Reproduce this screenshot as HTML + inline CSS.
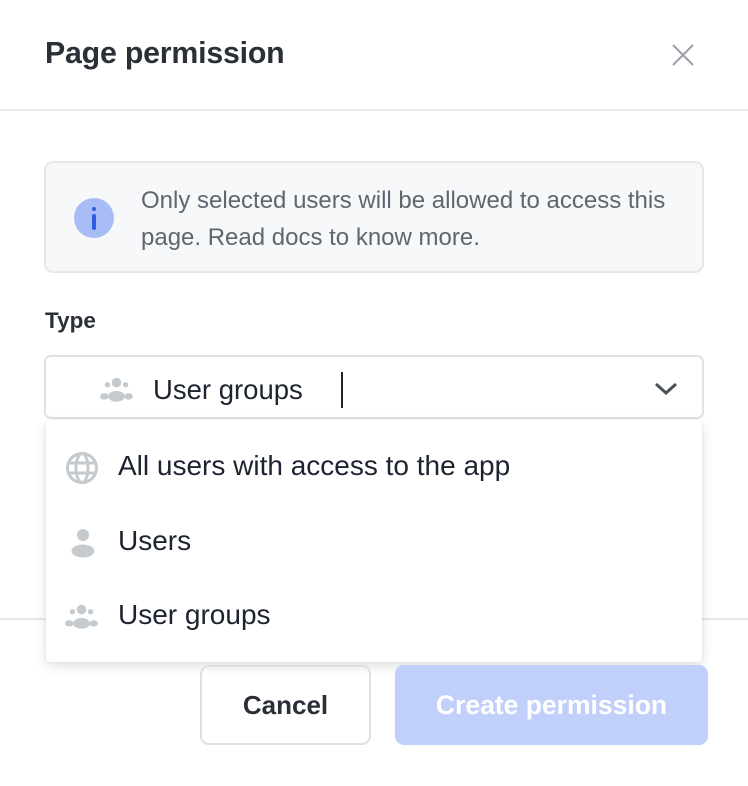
<!DOCTYPE html>
<html><head><style>
*{box-sizing:border-box;margin:0;padding:0}
body{width:748px;height:786px;background:#fff;font-family:"Liberation Sans",sans-serif;position:relative;overflow:hidden;color:#1d2330}
.abs{position:absolute}
</style></head><body>
<div class="abs" style="left:45px;top:37px;font-size:30.3px;font-weight:600;color:#2a2f38;letter-spacing:-0.2px">Page permission</div>
<svg class="abs" style="left:671px;top:43px" width="24" height="24" viewBox="0 0 24 24"><path d="M2 2L22 22M22 2L2 22" stroke="#9aa0a8" stroke-width="2"/></svg>
<div class="abs" style="left:0;top:109px;width:748px;height:2px;background:#e6e8eb"></div>
<div class="abs" style="left:44px;top:161px;width:660px;height:112px;background:#f7f8fa;border:2px solid #e5e7ea;border-radius:9px"></div>
<div class="abs" style="left:74px;top:198px;width:40px;height:40px;border-radius:50%;background:#a8bcf5"></div>
<div class="abs" style="left:92px;top:207px;width:4px;height:4px;border-radius:2px;background:#2f5bde"></div>
<div class="abs" style="left:92px;top:214px;width:4px;height:16px;border-radius:2px;background:#2f5bde"></div>
<div class="abs" style="left:141px;top:182px;font-size:24px;line-height:37px;color:#5e6670;width:550px">Only selected users will be allowed to access this page. Read docs to know more.</div>
<div class="abs" style="left:45px;top:308px;font-size:22.5px;font-weight:600;color:#2a2f38">Type</div>
<div class="abs" style="left:44px;top:355px;width:660px;height:64px;border:2px solid #dfe2e6;border-radius:7px"></div>
<svg class="abs" style="left:99px;top:376px" width="35" height="28" viewBox="0 0 33 26"><g fill="#c5cacf"><circle cx="16.5" cy="6" r="4.5"/><circle cx="8" cy="8" r="2.5"/><circle cx="25" cy="8" r="2.5"/><ellipse cx="16.5" cy="19" rx="8" ry="5"/><ellipse cx="5" cy="19" rx="4" ry="3"/><ellipse cx="28" cy="19" rx="4" ry="3"/></g></svg>
<div class="abs" style="left:153px;top:374px;font-size:27.5px;color:#1d2330">User groups</div>
<div class="abs" style="left:341px;top:372px;width:2px;height:36px;background:#1d2330"></div>
<svg class="abs" style="left:654px;top:381px" width="24" height="16" viewBox="0 0 24 16"><path d="M2 3L12 12L22 3" stroke="#4b5058" stroke-width="3" fill="none"/></svg>
<div class="abs" style="left:0;top:618px;width:748px;height:2px;background:#e6e8eb"></div>
<div class="abs" style="left:46px;top:420px;width:656px;height:242px;background:#fff;box-shadow:0 4px 12px rgba(0,0,0,0.12),0 0 2px rgba(0,0,0,0.08);border-radius:3px"></div>
<svg class="abs" style="left:66px;top:452px" width="32" height="32" viewBox="0 0 32 32"><circle cx="16" cy="16" r="14.5" fill="none" stroke="#c5cacf" stroke-width="3"/><ellipse cx="16" cy="16" rx="6" ry="14.5" fill="none" stroke="#c5cacf" stroke-width="3"/><path d="M2 11H30M2 21H30" stroke="#c5cacf" stroke-width="3"/></svg>
<div class="abs" style="left:118px;top:450px;font-size:28px;color:#1d2330">All users with access to the app</div>
<svg class="abs" style="left:70px;top:528px" width="26" height="30" viewBox="0 0 26 30"><g fill="#c5cacf"><circle cx="13" cy="7" r="6"/><ellipse cx="13" cy="23" rx="11.5" ry="6.5"/></g></svg>
<div class="abs" style="left:118px;top:525px;font-size:28px;color:#1d2330">Users</div>
<svg class="abs" style="left:64px;top:603px" width="35" height="28" viewBox="0 0 33 26"><g fill="#c5cacf"><circle cx="16.5" cy="6" r="4.5"/><circle cx="8" cy="8" r="2.5"/><circle cx="25" cy="8" r="2.5"/><ellipse cx="16.5" cy="19" rx="8" ry="5"/><ellipse cx="5" cy="19" rx="4" ry="3"/><ellipse cx="28" cy="19" rx="4" ry="3"/></g></svg>
<div class="abs" style="left:118px;top:599px;font-size:28px;color:#1d2330">User groups</div>
<div class="abs" style="left:200px;top:665px;width:171px;height:80px;border:2px solid #dcdfe3;border-radius:9px;font-size:26px;font-weight:600;color:#2a2f38;text-align:center;line-height:76px">Cancel</div>
<div class="abs" style="left:395px;top:665px;width:313px;height:80px;background:#c1cffb;border-radius:9px;font-size:26.5px;font-weight:600;color:#fff;text-align:center;line-height:80px">Create permission</div>
</body></html>
